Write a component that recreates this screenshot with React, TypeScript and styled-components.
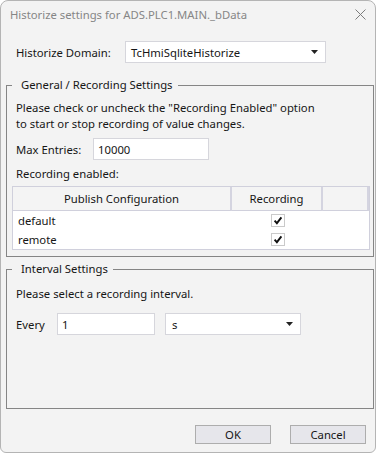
import React from "react";
import styled, { createGlobalStyle } from "styled-components";

const FONT = `"Noto Sans", "Open Sans", "DejaVu Sans", sans-serif`;

const Global = createGlobalStyle`
  html, body { margin: 0; padding: 0; background: #ffffff; }
  body { font-family: ${FONT}; font-size: 11.3px; color: #161616; }
  * { box-sizing: border-box; }
`;

const Window = styled.div`
  width: 376px;
  height: 453px;
  border: 1px solid #b4b4b4;
  border-radius: 8px 8px 6px 6px;
  background: #f3f3f3;
  display: flex;
  flex-direction: column;
  overflow: hidden;
`;

const TitleBar = styled.div`
  height: 29px;
  flex: none;
  display: flex;
  align-items: center;
  padding: 0 9px 2px 9px;
`;

const Title = styled.div`
  color: #868686;
  font-size: 11.3px;
  white-space: nowrap;
`;

const CloseButton = styled.div`
  margin-left: auto;
  width: 11px;
  height: 11px;
  display: flex;
`;

const DomainRow = styled.div`
  margin-top: 11px;
  padding-left: 15px;
  height: 22px;
  flex: none;
  display: flex;
  align-items: center;
`;

const Label = styled.div<{ $w: number }>`
  width: ${(p) => p.$w}px;
  flex: none;
  white-space: nowrap;
`;

const Field = styled.div<{ $w: number; $pad?: number; $ml?: number }>`
  width: ${(p) => p.$w}px;
  height: 22px;
  flex: none;
  margin-left: ${(p) => p.$ml ?? 0}px;
  background: #ffffff;
  border: 1px solid #d6d6dc;
  display: flex;
  align-items: center;
  padding: 0 7px 0 ${(p) => p.$pad ?? 4}px;
  white-space: nowrap;
`;

const FieldText = styled.span`
  flex: 1;
`;

const Arrow = () => (
  <svg width="7" height="4" viewBox="0 0 7 4">
    <polygon points="0,0 7,0 3.5,4" fill="#222" />
  </svg>
);

const Group = styled.fieldset<{ $top: number; $grow?: boolean }>`
  margin: ${(p) => p.$top}px 1px 0 5px;
  padding: 0 3px 6px 5px;
  border: 1px solid #858585;
  min-width: 0;
  flex: ${(p) => (p.$grow ? "1" : "none")};
`;

const Legend = styled.legend`
  padding: 0 5px 0 9px;
  margin: 0;
  line-height: 16px;
  white-space: nowrap;
`;

const Text = styled.div<{ $top: number }>`
  margin-top: ${(p) => p.$top}px;
  padding-left: 4px;
  line-height: 16px;
`;

const FieldRow = styled.div<{ $top: number }>`
  margin-top: ${(p) => p.$top}px;
  padding-left: 4px;
  display: flex;
  align-items: center;
  height: 22px;
`;

const Table = styled.div`
  margin-top: 4px;
  width: 358px;
  border: 1px solid #d0d0dc;
  display: grid;
  grid-template-columns: 219px 91px 46px;
`;

const HeadCell = styled.div`
  height: 24px;
  background: #f4f4f4;
  border-right: 2px solid #d4d4e0;
  border-bottom: 1px solid #d0d0dc;
  display: flex;
  align-items: center;
  justify-content: center;
  white-space: nowrap;
`;

const Cell = styled.div<{ $center?: boolean }>`
  height: 19px;
  background: #ffffff;
  display: flex;
  align-items: center;
  justify-content: ${(p) => (p.$center ? "center" : "flex-start")};
  padding-left: ${(p) => (p.$center ? 0 : 5)}px;
`;

const Check = () => (
  <svg width="14" height="13" viewBox="0 0 14 13">
    <rect x="0.5" y="0.5" width="13" height="12" fill="#fff" stroke="#cacaca" />
    <path d="M3.6 6.6 L5.9 9.2 L10.4 3.4" fill="none" stroke="#111" strokeWidth="1.9" />
  </svg>
);

const ButtonBar = styled.div`
  flex: none;
  margin-top: 16px;
  padding: 0 9px 8px 0;
  display: flex;
  justify-content: flex-end;
  gap: 19px;
`;

const Button = styled.div`
  width: 76px;
  height: 19px;
  background: #e6e6eb;
  border: 1px solid #adadad;
  display: flex;
  align-items: center;
  justify-content: center;
`;

const rows = ["default", "remote"];

export default function App() {
  return (
    <>
      <Global />
      <Window>
        <TitleBar>
          <Title>Historize settings for ADS.PLC1.MAIN._bData</Title>
          <CloseButton>
            <svg width="11" height="11" viewBox="0 0 11 11">
              <path d="M0.5 0.5 L10.5 10.5 M10.5 0.5 L0.5 10.5" stroke="#7c7c7c" strokeWidth="1" />
            </svg>
          </CloseButton>
        </TitleBar>

        <DomainRow>
          <Label $w={109}>Historize Domain:</Label>
          <Field $w={201} $pad={5}>
            <FieldText>TcHmiSqliteHistorize</FieldText>
            <Arrow />
          </Field>
        </DomainRow>

        <Group $top={14}>
          <Legend>General / Recording Settings</Legend>
          <Text $top={7}>
            Please check or uncheck the "Recording Enabled" option
            <br />
            to start or stop recording of value changes.
          </Text>
          <FieldRow $top={6}>
            <Label $w={77}>Max Entries:</Label>
            <Field $w={116}>
              <FieldText>10000</FieldText>
            </Field>
          </FieldRow>
          <Text $top={6}>Recording enabled:</Text>
          <Table>
            <HeadCell>Publish Configuration</HeadCell>
            <HeadCell>Recording</HeadCell>
            <HeadCell />
            {rows.map((r) => (
              <React.Fragment key={r}>
                <Cell>{r}</Cell>
                <Cell $center>
                  <Check />
                </Cell>
                <Cell />
              </React.Fragment>
            ))}
          </Table>
        </Group>

        <Group $top={4} $grow>
          <Legend>Interval Settings</Legend>
          <Text $top={9}>Please select a recording interval.</Text>
          <FieldRow $top={11}>
            <Label $w={41}>Every</Label>
            <Field $w={98}>
              <FieldText>1</FieldText>
            </Field>
            <Field $w={136} $pad={6} $ml={10}>
              <FieldText>s</FieldText>
              <Arrow />
            </Field>
          </FieldRow>
        </Group>

        <ButtonBar>
          <Button>OK</Button>
          <Button>Cancel</Button>
        </ButtonBar>
      </Window>
    </>
  );
}
